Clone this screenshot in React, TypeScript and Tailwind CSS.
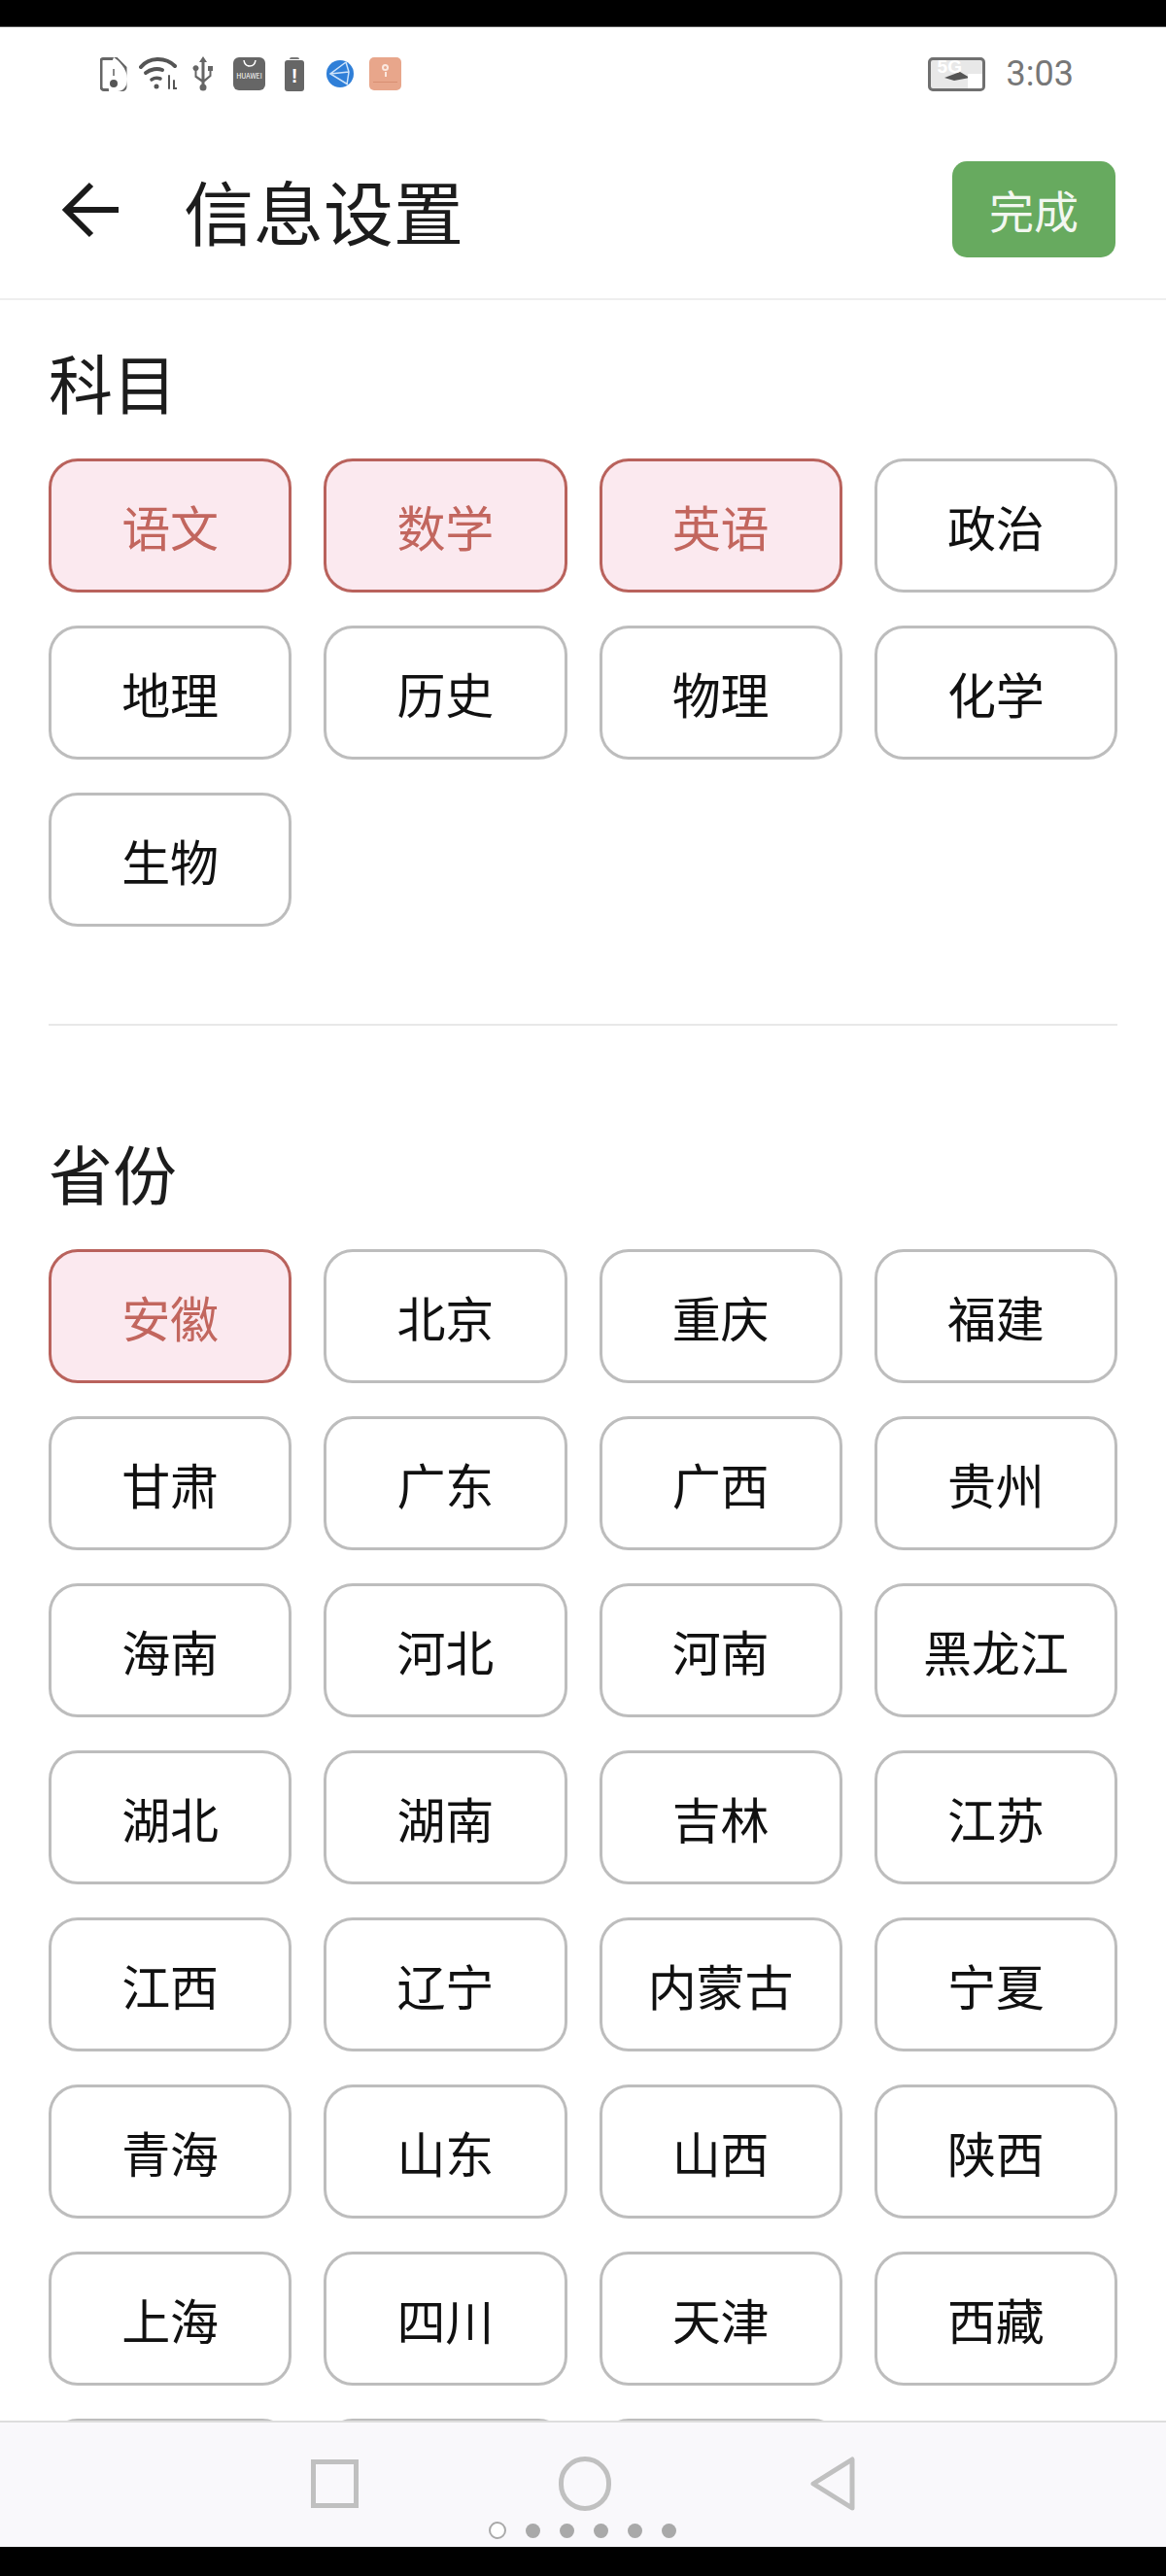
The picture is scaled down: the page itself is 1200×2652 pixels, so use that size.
const subjects = [
  { label: '语文', active: true },
  { label: '数学', active: true },
  { label: '英语', active: true },
  { label: '政治' },
  { label: '地理' },
  { label: '历史' },
  { label: '物理' },
  { label: '化学' },
  { label: '生物' },
];

const provinces = [
  { label: '安徽', active: true },
  ...[
    '北京', '重庆', '福建', '甘肃', '广东', '广西', '贵州', '海南', '河北', '河南', '黑龙江',
    '湖北', '湖南', '吉林', '江苏', '江西', '辽宁', '内蒙古', '宁夏', '青海', '山东', '山西',
    '陕西', '上海', '四川', '天津', '西藏', '新疆', '云南', '浙江',
  ].map((label) => ({ label })),
];

type Chip = { label: string; active?: boolean };

function StatusIcons() {
  return (
    <div className="flex h-[36px] items-center">
      {/* sim */}
      <svg width="28" height="35" viewBox="0 0 28 35" className="ml-[103px]">
        <path d="M3 1.5h14l9 9v20a3 3 0 0 1-3 3H4a3 3 0 0 1-3-3v-27a2 2 0 0 1 2-2z" fill="none" stroke="#666" strokeWidth="3" />
        <path d="M14 0c5 3 14 12 14 22 0 8-4 13-10 13H9c-1-8 1-26 5-35z" fill="#fff" />
        <circle cx="14" cy="27" r="4" fill="#555" />
        <path d="M14 12v7" stroke="#888" strokeWidth="2" />
      </svg>
      {/* wifi */}
      <svg width="39" height="36" viewBox="0 0 39 36" fill="none" stroke="#555" strokeLinecap="round" className="ml-[12px]">
        <path d="M2 11C10 1 27 0 37 10" strokeWidth="4" />
        <path d="M7 17c5-4 12-5 17-3" strokeWidth="4" />
        <path d="M13 24c3-2 6-2 9-1" strokeWidth="3.5" />
        <circle cx="18" cy="31" r="2.5" fill="#555" stroke="none" />
        <path d="M31 20v13M36 25v8h3" strokeWidth="2" />
      </svg>
      {/* usb */}
      <svg width="24" height="36" viewBox="0 0 24 36" fill="#666" className="ml-[15px]">
        <path d="M12 0l4 6h-2.5v17.5l5-4V15H17v-5h5v5h-1.500v5.500l-7 6V30h-3v-3.500l-7-5V15a3 3 0 1 1 2 0v5l5 3.500V6H8z" />
        <circle cx="12" cy="32" r="3.500" />
      </svg>
      {/* huawei store */}
      <div className="ml-[19px] flex h-[34px] w-[33px] flex-col items-center rounded-[6px] bg-[#666666]">
        <svg width="16" height="9" viewBox="0 0 16 9" fill="none" stroke="#fff" strokeWidth="1.500" className="mt-[3px]">
          <path d="M2 0c1 8 11 8 12 0" />
        </svg>
        <span className="mt-[3px] text-[7px] leading-[8px] text-white">HUAWEI</span>
      </div>
      {/* battery */}
      <div className="ml-[20px] flex flex-col items-center">
        <div className="h-[2px] w-[10px] rounded-t-[2px] bg-[#777777]" />
        <div className="mt-px flex h-[32px] w-[20px] items-center justify-center rounded-[3px] bg-[#666666] text-[20px] font-bold leading-none text-white [font-family:'Liberation_Sans',sans-serif]">
          !
        </div>
      </div>
      {/* globe */}
      <svg width="28" height="28" viewBox="0 0 28 28" className="ml-[23px]">
        <circle cx="14" cy="14" r="14" fill="#2f7fd8" />
        <path d="M20 2L4 14l18 11M20 2l3 10-2 13M4 14l19-2" fill="none" stroke="#cfe4fa" strokeWidth="1.500" />
      </svg>
      {/* orange app */}
      <div className="ml-[16px] flex h-[34px] w-[33px] flex-col items-center rounded-[5px] bg-[#e8a68b]">
        <div className="mt-[7px] h-[7px] w-[7px] rounded-full border-2 border-[#fbe8df]" />
        <div className="mt-px h-[5px] w-[2px] bg-[#fbe8df]" />
        <div className="mt-[5px] h-px w-[25px] bg-[#d98f72]" />
      </div>

      <div className="ml-auto flex items-center">
        {/* 5g box */}
        <div className="relative h-[35px] w-[59px] overflow-hidden rounded-[5px] border-[3px] border-[#707070] bg-[#e8e8e8]">
          <svg width="53" height="29" viewBox="0 0 53 29" className="block">
            <path d="M14 18l16-6 10 6-16 3z" fill="#555" />
            <path d="M38 14h15v15H38z" fill="#fff" />
          </svg>
          <span className="absolute left-[7px] top-[-3px] text-[19px] font-bold leading-[20px] text-white [font-family:'Liberation_Sans',sans-serif]">
            5G
          </span>
        </div>
        <span className="ml-[22px] mr-[95px] text-[36px] leading-[36px] text-[#777777] [font-family:'Roboto',sans-serif]">
          3:03
        </span>
      </div>
    </div>
  );
}

function ChipGrid({ items }: { items: Chip[] }) {
  return (
    <div className="grid grid-cols-4 gap-x-[33px] gap-y-[34px]">
      {items.map((c) => (
        <div
          key={c.label}
          className={`flex h-[138px] items-center justify-center rounded-[30px] border-[3px] text-[50px] ${
            c.active
              ? 'border-[#b9625c] bg-[#fbe9ef] text-[#c2665e]'
              : 'border-[#bdbdbd] bg-white text-[#111111]'
          }`}
        >
          {c.label}
        </div>
      ))}
    </div>
  );
}

export default function App() {
  return (
    <div className="flex h-[2652px] w-[1200px] flex-col overflow-hidden bg-black [font-family:'Noto_Sans_CJK_SC','Noto_Sans',sans-serif]">
      <div className="h-[28px] shrink-0 border-b border-[#555555] bg-black" />

      {/* Status bar + header */}
      <header className="h-[281px] shrink-0 border-b-2 border-[#eeeeee] bg-white">
        <div className="pt-[30px]">
          <StatusIcons />
        </div>
        <div className="mt-[72px] flex items-center pl-[64px] pr-[52px]">
          <svg width="58" height="58" viewBox="0 0 58 58" fill="none" stroke="#1a1a1a" strokeWidth="6">
            <path d="M58 29H4M30 3L4 29l26 26" />
          </svg>
          <h1 className="ml-[67px] text-[72px] font-normal leading-[99px] text-[#1c1c1c]">信息设置</h1>
          <button className="ml-auto h-[99px] w-[168px] rounded-[15px] bg-[#67aa5f] text-[46px] text-[#f2f7f0]">
            完成
          </button>
        </div>
      </header>

      {/* Scrollable form */}
      <main className="min-h-0 flex-1 overflow-hidden bg-white px-[50px]">
        <h2 className="mt-[37px] text-[66px] font-normal leading-[92px] text-[#1c1c1c]">科目</h2>
        <div className="mt-[34px]">
          <ChipGrid items={subjects} />
        </div>
        <div className="mt-[100px] h-[2px] bg-[#e8e8e8]" />
        <h2 className="mt-[104px] text-[66px] font-normal leading-[92px] text-[#1c1c1c]">省份</h2>
        <div className="mt-[34px]">
          <ChipGrid items={provinces} />
        </div>
      </main>

      {/* System nav */}
      <nav className="h-[130px] shrink-0 border-t-2 border-[#dddddd] bg-[#f9f8fb]">
        <div className="mt-[35px] flex h-[56px] items-center justify-center">
          <div className="h-[50px] w-[49px] border-[5px] border-[#c0c0c0]" />
          <div className="ml-[206px] h-[56px] w-[54px] rounded-full border-[5px] border-[#c0c0c0]" />
          <svg width="46" height="56" viewBox="0 0 46 56" fill="none" stroke="#c0c0c0" strokeWidth="5" strokeLinejoin="round" className="ml-[205px]">
            <path d="M43 3v50L3 28z" />
          </svg>
        </div>
        <div className="mt-[11px] flex items-center justify-center gap-[20px] pr-[2px]">
          <div className="h-[18px] w-[18px] rounded-full border-2 border-[#a9a9a9] bg-white" />
          <div className="h-[15px] w-[15px] rounded-full bg-[#a9a9a9]" />
          <div className="h-[15px] w-[15px] rounded-full bg-[#a9a9a9]" />
          <div className="h-[15px] w-[15px] rounded-full bg-[#a9a9a9]" />
          <div className="h-[15px] w-[15px] rounded-full bg-[#a9a9a9]" />
          <div className="h-[15px] w-[15px] rounded-full bg-[#a9a9a9]" />
        </div>
      </nav>

      <div className="h-[30px] shrink-0 bg-black" />
    </div>
  );
}
